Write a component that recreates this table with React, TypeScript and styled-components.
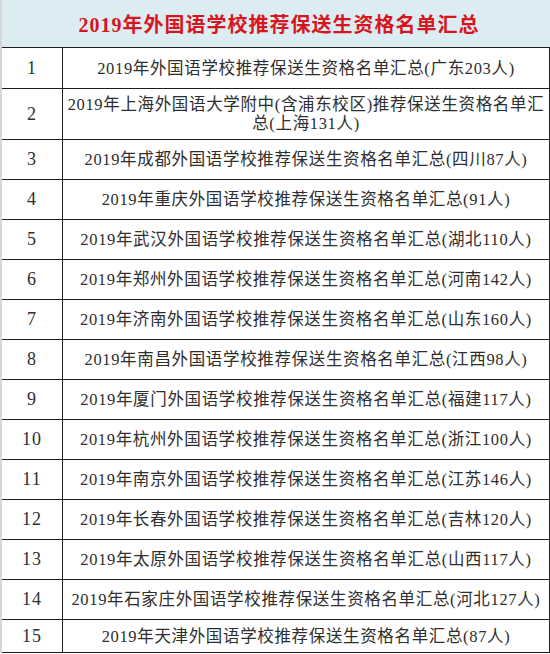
import React from "react";
import styled, { createGlobalStyle } from "styled-components";

const GlobalStyle = createGlobalStyle`
  html, body { margin: 0; padding: 0; background: #ffffff; }
  body { font-family: "Liberation Serif", "Noto Sans CJK SC", serif; }
`;

const Table = styled.div`
  width: 550px;
  box-sizing: border-box;
  border-left: 2px solid #d6d6d6;
  background: #ffffff;
`;

const Header = styled.div`
  height: 47px;
  border-bottom: 1px solid #1e1e1e;
  background: #dbedf3;
  display: flex;
  align-items: center;
  justify-content: center;
  color: #d8151c;
  font-size: 20px;
  font-weight: 700;
  letter-spacing: 1px;
  padding-left: 6px;
`;

const Row = styled.div<{ $h: number }>`
  display: grid;
  grid-template-columns: 61px 1fr;
  height: ${(p) => p.$h}px;
  border-bottom: 1px solid #1e1e1e;
  border-right: 1px solid #1e1e1e;
  box-sizing: border-box;
`;

const NumCell = styled.div`
  display: flex;
  align-items: center;
  justify-content: center;
  border-right: 1px solid #1e1e1e;
  color: #2e2e2e;
  font-size: 18px;
  letter-spacing: 1px;
`;

const TextCell = styled.div`
  display: flex;
  align-items: center;
  justify-content: center;
  text-align: center;
  color: #2e2e2e;
  font-size: 16.5px;
  line-height: 19px;
  letter-spacing: 0.65px;
  padding: 0 3px;
`;

const rows: string[] = [
  "2019年外国语学校推荐保送生资格名单汇总(广东203人)",
  "2019年上海外国语大学附中(含浦东校区)推荐保送生资格名单汇总(上海131人)",
  "2019年成都外国语学校推荐保送生资格名单汇总(四川87人)",
  "2019年重庆外国语学校推荐保送生资格名单汇总(91人)",
  "2019年武汉外国语学校推荐保送生资格名单汇总(湖北110人)",
  "2019年郑州外国语学校推荐保送生资格名单汇总(河南142人)",
  "2019年济南外国语学校推荐保送生资格名单汇总(山东160人)",
  "2019年南昌外国语学校推荐保送生资格名单汇总(江西98人)",
  "2019年厦门外国语学校推荐保送生资格名单汇总(福建117人)",
  "2019年杭州外国语学校推荐保送生资格名单汇总(浙江100人)",
  "2019年南京外国语学校推荐保送生资格名单汇总(江苏146人)",
  "2019年长春外国语学校推荐保送生资格名单汇总(吉林120人)",
  "2019年太原外国语学校推荐保送生资格名单汇总(山西117人)",
  "2019年石家庄外国语学校推荐保送生资格名单汇总(河北127人)",
  "2019年天津外国语学校推荐保送生资格名单汇总(87人)",
];

const heights = [41, 51, 40, 40, 40, 40, 40, 40, 40, 40, 40, 40, 40, 40, 33];

export default function App() {
  return (
    <>
      <GlobalStyle />
      <Table>
        <Header>2019年外国语学校推荐保送生资格名单汇总</Header>
        {rows.map((t, i) => (
          <Row key={i} $h={heights[i]}>
            <NumCell>{i + 1}</NumCell>
            <TextCell>{t}</TextCell>
          </Row>
        ))}
      </Table>
    </>
  );
}
